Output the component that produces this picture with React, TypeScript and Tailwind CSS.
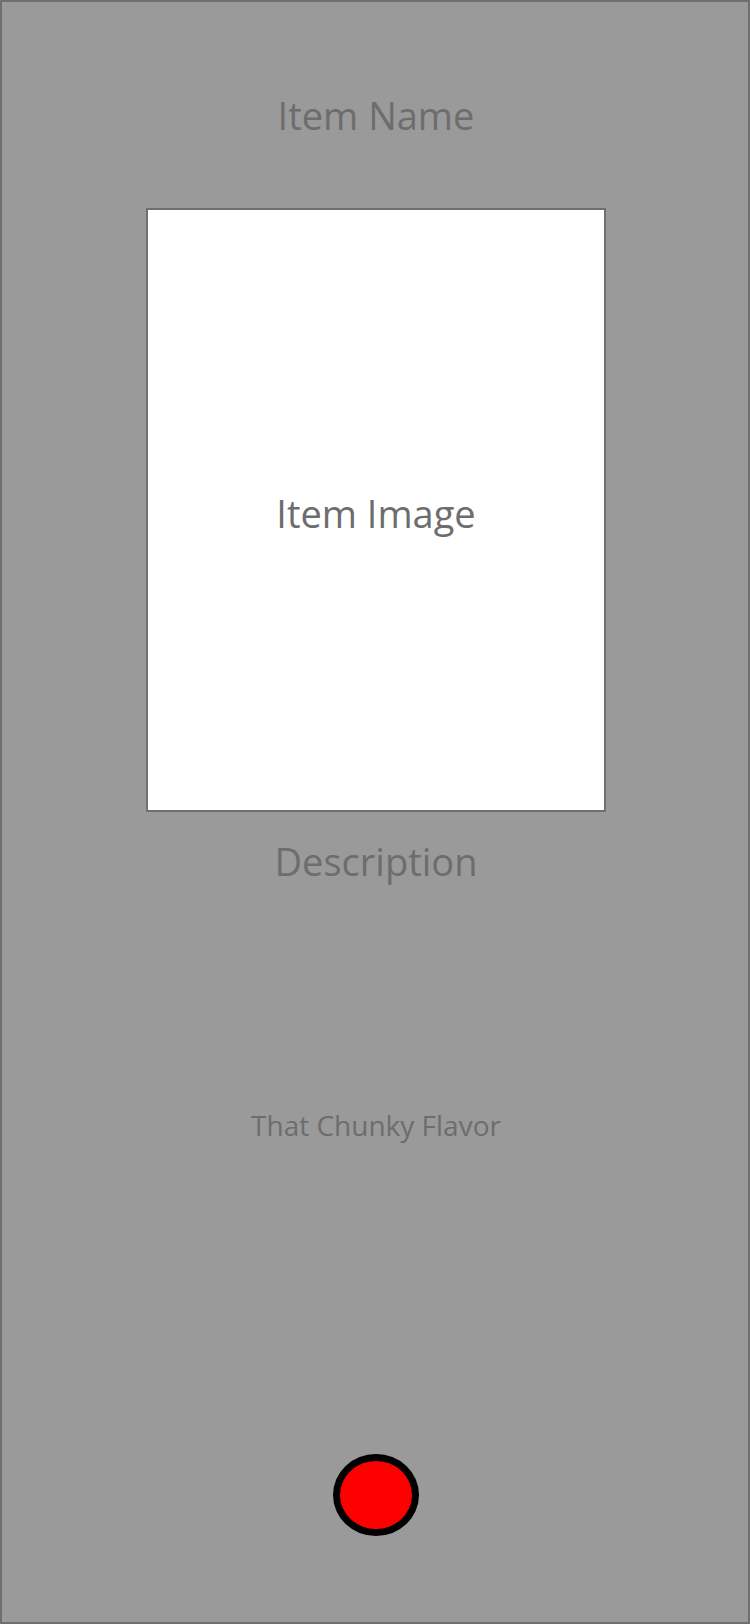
import React from "react";

export default function App() {
  return (
    <div
      className="w-[750px] h-[1624px] bg-[#9a9a9a] border-2 border-[#6f6f6f] flex flex-col items-center text-[#6d6d6d] pl-[2px]"
      style={{ fontFamily: '"Open Sans", "Noto Sans", sans-serif' }}
    >
      <div className="mt-[93px] h-[40px] leading-[40px] text-[38px]">Item Name</div>
      <div className="mt-[73px] w-[460px] h-[604px] bg-white border-2 border-[#6f6f6f] flex items-center justify-center">
        <span className="text-[38px] leading-[40px] pt-[6px]">Item Image</span>
      </div>
      <div className="mt-[29px] h-[40px] leading-[40px] text-[38px]">Description</div>
      <div className="mt-[228px] h-[32px] leading-[32px] text-[28px]">That Chunky Flavor</div>
      <div className="mt-[313px] w-[86px] h-[82px] rounded-[50%] bg-[#ff0000] border-[7px] border-black" />
    </div>
  );
}
